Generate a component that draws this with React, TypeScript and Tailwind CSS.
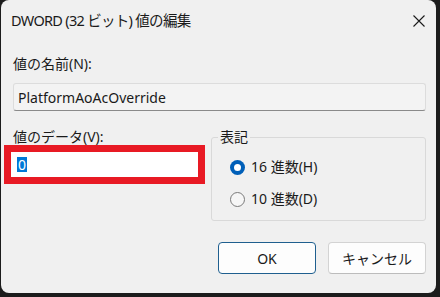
import React from "react";

const font = { fontFamily: '"Noto Sans", "Noto Sans CJK JP", sans-serif' };

function CloseIcon() {
  return (
    <svg width="12" height="12" viewBox="0 0 12 12" className="block">
      <path d="M0.5 0.5 L11.5 11.5 M11.5 0.5 L0.5 11.5" stroke="#1a1a1a" strokeWidth="1.1" fill="none" />
    </svg>
  );
}

function Radio({ checked, label }: { checked?: boolean; label: string }) {
  return (
    <div className="flex h-[20px] items-center gap-[6px]">
      {checked ? (
        <span className="flex h-[15px] w-[15px] items-center justify-center rounded-full bg-[#005fb8]">
          <span className="h-[7px] w-[7px] rounded-full bg-white" />
        </span>
      ) : (
        <span className="h-[15px] w-[15px] rounded-full border border-[#7a7a7a] bg-[#f6f6f6]" />
      )}
      <span className="text-[14px] leading-[20px] text-[#1a1a1a]">{label}</span>
    </div>
  );
}

export default function App() {
  return (
    <div className="h-[297px] w-[440px] overflow-hidden bg-[#1c1c1c]" style={font}>
      <div className="ml-[1px] flex h-[293px] w-[435px] flex-col rounded-[8px] bg-[#f0f0f0]">
        {/* title bar */}
        <div className="flex h-[42px] shrink-0 items-center justify-between pl-[10px] pr-[11px]">
          <span className="text-[14.5px] tracking-[-0.7px] text-[#1a1a1a]">DWORD (32 ビット) 値の編集</span>
          <CloseIcon />
        </div>

        <div className="flex flex-col pl-[12px] pr-[10px]">
          <div className="mt-[12px] text-[14px] leading-[20px] text-[#1a1a1a]">値の名前(N):</div>
          <div className="mt-[9px] flex h-[28px] items-center rounded-[3px] border border-[#dcdcdc] border-b-[#8a8a8a] bg-[#f3f3f3] pl-[4px] text-[14px] text-[#1a1a1a]">
            PlatformAoAcOverride
          </div>

          <div className="mt-[16px] flex items-start justify-between">
            <div className="flex flex-col">
              <div className="h-[18px] text-[14px] leading-[20px] text-[#1a1a1a]">値のデータ(V):</div>
              <div className="-ml-[9px] h-[39px] w-[201px] border-[7px] border-[#e81a24] bg-white pl-[6px]">
                <span className="inline-block h-[15px] bg-[#0078d7] px-[1px] text-[14px] leading-[15px] text-white">0</span>
              </div>
            </div>

            <fieldset className="w-[215px] rounded-[3px] border border-[#d9d9d9] pb-[11px] pl-[18px]">
              <legend className="-ml-[12px] px-[2px] text-[14px] leading-[20px] text-[#1a1a1a]">表記</legend>
              <div className="mt-[10px] flex flex-col gap-[12px]">
                <Radio checked label="16 進数(H)" />
                <Radio label="10 進数(D)" />
              </div>
            </fieldset>
          </div>

          <div className="mt-[21px] flex justify-end gap-[12px]">
            <button className="h-[32px] w-[98px] rounded-[4px] border border-[#1f5f8f] bg-[#fdfdfd] text-[14px] text-[#1a1a1a]">
              OK
            </button>
            <button className="h-[32px] w-[98px] rounded-[4px] border border-[#d3d3d3] border-b-[#bcbcbc] bg-[#fdfdfd] text-[14px] text-[#1a1a1a]">
              キャンセル
            </button>
          </div>
        </div>
      </div>
    </div>
  );
}
